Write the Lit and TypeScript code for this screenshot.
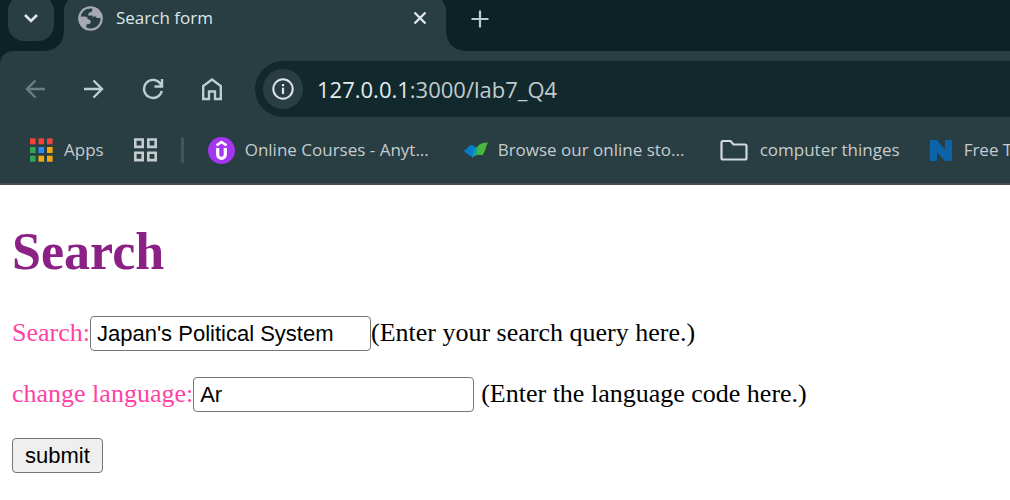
import { LitElement, html, css, svg } from "lit";
import { customElement, state } from "lit/decorators.js";

const arrow = svg`<path d="M20 10H2M10.500 1.500L2 10l8.500 8.500" fill="none" stroke="currentColor" stroke-width="2.400"/>`;

@customElement("browser-tabs")
class BrowserTabs extends LitElement {
  static styles = css`
    :host { display: flex; align-items: flex-end; height: 51px; background: #0b2226; padding-left: 8px; overflow: hidden; }
    button { border: 0; padding: 0; background: none; color: #dfe6e8; display: grid; place-items: center; }
    .search { width: 46px; height: 46px; border-radius: 16px; background: #283e43; margin: 0 10px 10px 0; }
    .tab { position: relative; flex: 0 1 382px; min-width: 160px; box-sizing: border-box; display: flex; align-items: center;
      height: 56px; padding: 0 16px 10px 14px; border-radius: 16px 16px 0 0; background: #283e43; color: #dfe6e8; font: 17px/24px "Open Sans", sans-serif; }
    .tab::before, .tab::after { content: ""; position: absolute; bottom: 0; width: 18px; height: 18px; }
    .tab::before { right: 100%; background: radial-gradient(circle at 0 0, transparent 17px, #283e43 18px); }
    .tab::after { left: 100%; background: radial-gradient(circle at 100% 0, transparent 17px, #283e43 18px); }
    .title { flex: 1; margin-left: 13px; }
    .close { width: 20px; height: 24px; }
    .new { width: 36px; height: 36px; margin: 0 0 14px 16px; color: #b7cdd2; }
  `;
  render() {
    return html`
      <button class="search" aria-label="Search tabs">
        <svg width="16" height="12" viewBox="0 0 16 12"><path d="M2 3l6 6 6-6" fill="none" stroke="currentColor" stroke-width="2.600"/></svg>
      </button>
      <div class="tab">
        <svg width="25" height="25" viewBox="0 0 24 24"><circle cx="12" cy="12" r="11.800" fill="#a6a9b4"/>
          <path d="M13.800 2.400C8 1.600 3.500 5 2.500 10.300c2.500-.5 5-.3 7.500 1.200H13c.6 0 1-.4 1-1V9.200H9.800c0-2 .6-3.200 2.200-3.200 1.200 0 1.800-.8 1.800-3.600z" fill="#283e43"/>
          <path d="M21.600 11.500c.3 5.700-4.100 10.100-9.600 10.100-1.500 0-2.800-.3-4-.9v-3c3 0 4.200-.7 4.200-2.600 0-1.500-1-2.300-2.700-2.300l-1-1.500H14V10h3.300c0 1 .7 1.500 1.700 1.500z" fill="#283e43"/></svg>
        <span class="title">Search form</span>
        <button class="close" aria-label="Close tab"><svg width="14" height="14" viewBox="0 0 14 14"><path d="M1.500 1.500l11 11m0-11l-11 11" stroke="currentColor" stroke-width="2.400"/></svg></button>
      </div>
      <button class="new" aria-label="New tab"><svg width="18" height="18" viewBox="0 0 18 18"><path d="M9 .5v17M.5 9h17" stroke="currentColor" stroke-width="2.200"/></svg></button>
    `;
  }
}

@customElement("browser-toolbar")
class BrowserToolbar extends LitElement {
  static styles = css`
    :host { display: block; background: #0b2226; }
    .bar { display: flex; align-items: center; padding: 10px 0 0 5px; background: #283e43; border-radius: 13px 0 0 0; }
    button { border: 0; padding: 0; background: none; color: #b7d0d6; width: 59px; height: 40px; display: grid; place-items: center; }
    .dim { color: #6b7d82; }
    .flip { transform: scaleX(-1); }
    .address { flex: 1; min-width: 0; height: 56px; box-sizing: border-box; margin-left: 14px; padding-left: 8px; display: flex; align-items: center;
      gap: 14px; border-radius: 28px 0 0 28px; background: #11292d; color: #c3cbcd; font: 22px/28px "Open Sans", sans-serif; white-space: nowrap; }
    .info { width: 40px; border-radius: 20px; background: #283e43; color: #dfe6e8; }
    .host { color: #e6ecee; }
  `;
  render() {
    return html`<div class="bar">
      <button class="dim" aria-label="Back"><svg width="20" height="20" viewBox="0 0 20 20">${arrow}</svg></button>
      <button aria-label="Forward"><svg class="flip" width="20" height="20" viewBox="0 0 20 20">${arrow}</svg></button>
      <button aria-label="Reload"><svg width="22" height="22" viewBox="0 0 22 22" fill="none" stroke="currentColor" stroke-width="2.400"><path d="M19.800 13a9 9 0 1 1-1.800-7.800l1.500 2.300M20 1v7.500h-7.500"/></svg></button>
      <button aria-label="Home"><svg width="22" height="24" viewBox="0 0 22 24" fill="none" stroke="currentColor" stroke-width="2.400"><path d="M2.200 22V9L11 2.500 19.800 9v13H14v-7.500H8V22z"/></svg></button>
      <div class="address">
        <button class="info" aria-label="Site information"><svg width="22" height="22" viewBox="0 0 22 22"><circle cx="11" cy="11" r="9.700" fill="none" stroke="currentColor" stroke-width="2"/><path d="M11 9.700V16M11 6v2.200" stroke="currentColor" stroke-width="2.200"/></svg></button>
        <span><span class="host">127.0.0.1</span>:3000/lab7_Q4</span>
      </div>
    </div>`;
  }
}

const colors = ["#f0443a", "#f0443a", "#f0443a", "#32a557", "#2a8cf5", "#f5a70c", "#32a557", "#f5a70c", "#f5a70c"];

@customElement("bookmark-bar")
class BookmarkBar extends LitElement {
  static styles = css`
    :host { display: flex; align-items: center; height: 66px; padding-left: 30px; overflow: hidden; background: #283e43; border-bottom: 2px solid #444c50;
      color: #c5cccf; font: 17px/24px "Open Sans", sans-serif; white-space: nowrap; }
    a { display: flex; align-items: center; flex: none; gap: 10px; margin-right: 30px; color: inherit; text-decoration: none; }
    .groups { margin-right: 24px; }
    .rule { flex: none; width: 3px; height: 26px; border-radius: 2px; margin-right: 24px; background: #40565b; }
    .wide { width: 226px; }
    .folder { gap: 12px; }
    svg { flex: none; }
  `;
  render() {
    return html`
      <a href="#apps"><svg width="24" height="24" viewBox="0 0 24 24">${colors.map((c, i) => svg`<rect x=${(i % 3) * 8.500} y=${Math.floor(i / 3) * 8.700 + 0.300} width="5.600" height="6" fill=${c}/>`)}</svg>Apps</a>
      <a class="groups" href="#groups" aria-label="Tab groups"><svg width="23" height="24" viewBox="0 0 23 24" fill="none" stroke="#c5cccf" stroke-width="2.600"><path d="M1.300 1.500h7.400v7.400H1.300zM14.300 1.500h7.400v7.400h-7.400zM1.300 14.700h7.400v7.400H1.300zM14.300 14.700h7.400v7.400h-7.400z"/></svg></a>
      <span class="rule"></span>
      <a class="wide" href="#courses"><svg width="27" height="27" viewBox="0 0 27 27"><circle cx="13.500" cy="13.500" r="13.500" fill="#a435f0"/><path d="M8.500 8.300l5-3.300 5 3.300" fill="none" stroke="#fff" stroke-width="2.600"/><path d="M9.700 11v6.500a3.800 3.800 0 0 0 7.600 0V11" fill="none" stroke="#fff" stroke-width="3.200"/></svg>Online Courses - Anyt...</a>
      <a class="wide" href="#store"><svg width="24" height="16" viewBox="0 0 24 16"><path d="M0 8.500C3 7 4 4 6.500 3.200c2.500-.4 4 .8 5.500 2.800l-1 7-2.500 2.500C5.500 12.500 3 13 0 8.500z" fill="#087bc9"/><path d="M11.500 13.500c-1-7 2-13 12.500-13-2 3-2.500 9-5.500 12.500-2.500.5-4.500-1-7 .5z" fill="#47b83d"/><path d="M8.500 15.500C8 11.500 9.500 8 12 5l1.500 1-1 7z" fill="#159da0"/></svg>Browse our online sto...</a>
      <a class="folder" href="#computer"><svg width="28" height="22" viewBox="0 0 28 22"><path d="M3 2h7.500l3 3.500H25q1.500 0 1.500 1.500v12q0 1.500-1.500 1.500H3q-1.500 0-1.500-1.500V3.500Q1.500 2 3 2z" fill="none" stroke="#d4d8e0" stroke-width="2.200"/></svg>computer thinges</a>
      <a class="folder" href="#free"><svg width="22" height="21" viewBox="0 0 22 21"><path d="M0 0h7l8 10V0h7v21h-7L7 12v9H0z" fill="#0d63a8"/></svg>Free T</a>
    `;
  }
}

@customElement("app-root")
class AppRoot extends LitElement {
  @state() query = "Japan's Political System";
  @state() language = "Ar";
  static styles = css`
    :host { display: block; min-height: 100vh; overflow-x: hidden; background: #fff; }
    .page { padding: 37px 12px 0; color: #000; font: 26px/30px "Liberation Serif", serif; }
    h1 { margin: 0; color: #8b2085; font-size: 52px; line-height: 60px; }
    form { padding-top: 34px; display: flex; flex-direction: column; align-items: flex-start; gap: 26px; }
    .row { display: flex; align-items: baseline; }
    label { color: #ff43a4; }
    input { box-sizing: border-box; width: 281px; height: 35px; padding: 0 6px; border: 1px solid #767676; border-radius: 4px;
      background: #fff; color: #000; font: 22px/26px "Liberation Sans", sans-serif; }
    .spaced { margin-left: 7px; }
    button { box-sizing: border-box; height: 35px; padding: 0 12px; border: 1px solid #767676; border-radius: 4px; background: #efefef;
      color: #000; font: 22px/26px "Liberation Sans", sans-serif; }
  `;
  render() {
    return html`
      <browser-tabs></browser-tabs>
      <browser-toolbar></browser-toolbar>
      <bookmark-bar></bookmark-bar>
      <main class="page">
        <h1>Search</h1>
        <form @submit=${(e: Event) => e.preventDefault()}>
          <div class="row"><label for="query">Search:</label><input id="query" type="text" .value=${this.query}><span>(Enter your search query here.)</span></div>
          <div class="row"><label for="language">change language:</label><input id="language" type="text" .value=${this.language}><span class="spaced">(Enter the language code here.)</span></div>
          <button type="submit">submit</button>
        </form>
      </main>
    `;
  }
}
